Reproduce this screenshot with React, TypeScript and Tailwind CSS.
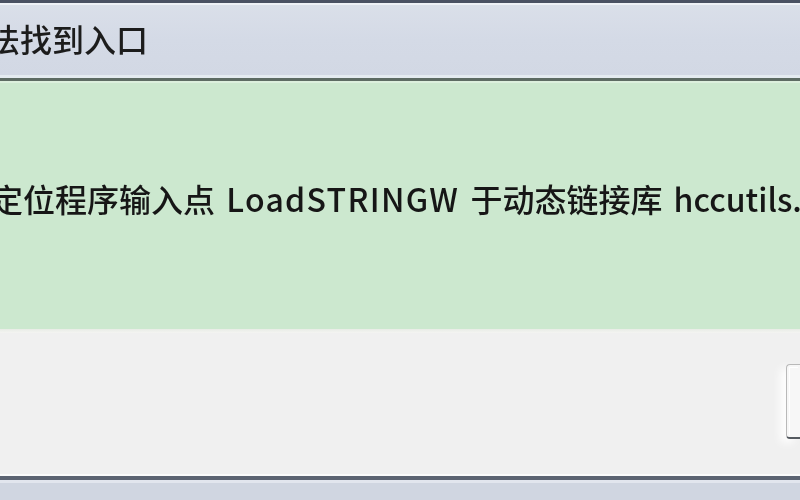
const font = { fontFamily: '"Noto Sans CJK SC", "Noto Sans", sans-serif' };

export default function App() {
  return (
    <div className="flex h-[500px] w-[800px] flex-col overflow-hidden bg-[#f0f0f0]" style={font}>
      {/* window frame top */}
      <div className="h-[3px] bg-[#4a5162]" />
      <div className="h-[2px] bg-[#eef1f6]" />

      {/* title bar */}
      <div className="flex h-[70px] items-center bg-gradient-to-b from-[#dadfe9] via-[#d4dae6] to-[#d2d8e4] pb-[4px]">
        <span className="ml-[-44px] whitespace-nowrap text-[32px] font-medium leading-none text-[#1c1c1c] blur-[0.4px]">
          无法找到入口
        </span>
      </div>
      <div className="h-[3px] bg-[#e4ebf0]" />
      <div className="h-[3px] bg-[#5d6b63]" />
      <div className="h-[2px] bg-[#dcefdd]" />

      {/* message area */}
      <div className="flex h-[246px] flex-col bg-[#cce8cf] pt-[99px]">
        <p className="ml-[-73px] whitespace-nowrap text-[32px] font-medium leading-none text-[#161616] blur-[0.4px]">
          无法定位程序输入点 <span className="mx-[4px] tracking-[1.3px]">LoadSTRINGW</span> 于动态链接库{" "}
          <span className="ml-[4px]">hccutils.dll</span> 上。
        </p>
      </div>

      {/* button strip */}
      <div className="h-[4px] bg-gradient-to-b from-[#e8ece6] to-[#f4f4f2]" />
      <div className="flex h-[141px] items-start justify-end bg-[#f0f0f0] pt-[31px]">
        <div className="relative h-[75px] w-[14px] rounded-tl-[4px] rounded-bl-[4px] border-l border-t border-b-2 border-[#b9b9b9] border-b-[#555a60] bg-[#f7f7f7] shadow-[-6px_4px_8px_rgba(255,255,255,0.9)]">
          <div className="absolute inset-[2px] border-l border-t border-[#ffffff]" />
        </div>
      </div>

      {/* window frame bottom */}
      <div className="h-[2px] bg-[#fbfbfb]" />
      <div className="h-[4px] bg-[#5c6472]" />
      <div className="h-[3px] bg-[#e2e6ee]" />
      <div className="flex-1 bg-[#d0d6e1]" />
    </div>
  );
}
